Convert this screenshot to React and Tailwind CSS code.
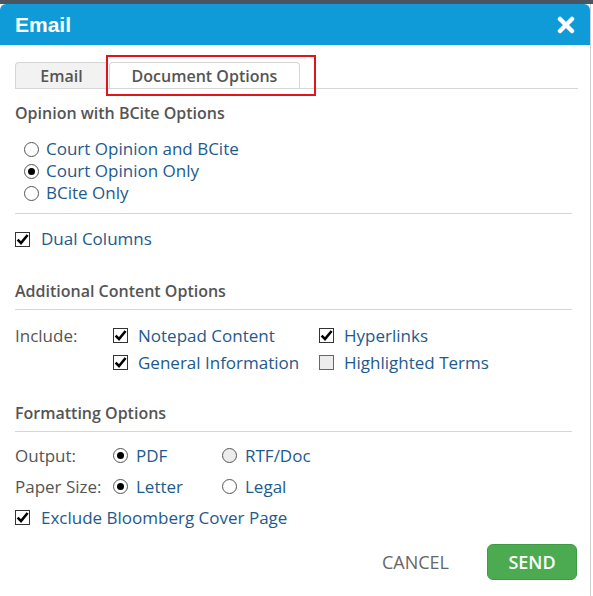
import React from "react";

const BLUE_TEXT = "text-[#1d5a8e]";

function Radio({ checked, dim }) {
  return (
    <span
      className={`inline-flex h-[15px] w-[15px] shrink-0 items-center justify-center rounded-full border border-[#555] ${
        dim ? "bg-[#ececec]" : "bg-white"
      }`}
    >
      {checked && <span className="h-[7px] w-[7px] rounded-full bg-black" />}
    </span>
  );
}

function Check({ checked }) {
  return (
    <span
      className={`inline-flex h-[15px] w-[15px] shrink-0 items-center justify-center border border-[#333] ${
        checked ? "bg-white" : "bg-[#ececec] border-[#666]"
      }`}
    >
      {checked && (
        <svg width="13" height="13" viewBox="0 0 13 13">
          <path d="M1.6 6.6 L5 10 L11.6 2" fill="none" stroke="#000" strokeWidth="2.6" />
        </svg>
      )}
    </span>
  );
}

function SectionTitle({ children }) {
  return (
    <div className="text-[16px] font-semibold leading-[20px] text-[#555]">{children}</div>
  );
}

export default function App() {
  return (
    <div className="relative h-[596px] w-[593px] overflow-hidden bg-white font-['Open_Sans',sans-serif]">
      {/* page behind the dialog */}
      <div className="h-[4px] bg-[#4b5560]" />

      <div className="h-[592px] w-[591px] border-r border-[#cfcfcf]">
        {/* ── Header ── */}
        <div className="flex h-[41px] items-center justify-between rounded-t-[6px] bg-[#0f9bd7] pl-[15px] pr-[15px]">
          <span className="font-['Liberation_Sans',sans-serif] text-[21px] font-bold text-white">Email</span>
          <svg width="18" height="18" viewBox="0 0 18 18">
            <path d="M3 3 L15 15 M15 3 L3 15" stroke="#fff" strokeWidth="4.5" strokeLinecap="round" />
          </svg>
        </div>

        <div className="px-[15px]">
          {/* ── Tabs ── */}
          <div className="mt-[17px] flex h-[27px] w-[563px] items-end border-b border-[#d6d6d6]">
            <div className="flex h-[26px] w-[93px] items-center justify-center rounded-t-[4px] border border-b-0 border-[#d6d6d6] bg-[#f2f2f2] text-[16px] font-semibold text-[#555]">
              Email
            </div>
            <div className="ml-[1px] flex h-[26px] w-[191px] items-center justify-center rounded-t-[4px] border border-b-0 border-[#d6d6d6] bg-white text-[16px] font-semibold text-[#555]">
              Document Options
            </div>
          </div>

          {/* ── Opinion with BCite Options ── */}
          <div className="mt-[14px]">
            <SectionTitle>Opinion with BCite Options</SectionTitle>
          </div>
          <div className={`mt-[15px] flex flex-col pl-[9px] text-[17px] leading-[22px] ${BLUE_TEXT}`}>
            <label className="flex items-center gap-[7px]">
              <Radio /> Court Opinion and BCite
            </label>
            <label className="flex items-center gap-[7px]">
              <Radio checked /> Court Opinion Only
            </label>
            <label className="flex items-center gap-[7px]">
              <Radio /> BCite Only
            </label>
          </div>
          <div className="mt-[9px] h-px w-[557px] bg-[#d6d6d6]" />
          <label className={`mt-[14px] flex items-center gap-[11px] text-[17px] leading-[22px] ${BLUE_TEXT}`}>
            <Check checked /> Dual Columns
          </label>

          {/* ── Additional Content Options ── */}
          <div className="mt-[31px]">
            <SectionTitle>Additional Content Options</SectionTitle>
          </div>
          <div className="mt-[8px] h-px w-[557px] bg-[#d6d6d6]" />
          <div className="mt-[12px] flex text-[17px] leading-[27px]">
            <div className="w-[98px] text-[#555]">Include:</div>
            <div className={`grid grid-cols-[206px_auto] ${BLUE_TEXT}`}>
              <label className="flex items-center gap-[10px]">
                <Check checked /> Notepad Content
              </label>
              <label className="flex items-center gap-[10px]">
                <Check checked /> Hyperlinks
              </label>
              <label className="flex items-center gap-[10px]">
                <Check checked /> General Information
              </label>
              <label className="flex items-center gap-[10px]">
                <Check /> Highlighted Terms
              </label>
            </div>
          </div>

          {/* ── Formatting Options ── */}
          <div className="mt-[27px]">
            <SectionTitle>Formatting Options</SectionTitle>
          </div>
          <div className="mt-[8px] h-px w-[557px] bg-[#d6d6d6]" />
          <div className="mt-[8px] grid grid-cols-[98px_109px_auto] text-[17px] leading-[31px]">
            <div className="text-[#555]">Output:</div>
            <label className={`flex items-center gap-[8px] ${BLUE_TEXT}`}>
              <Radio checked /> PDF
            </label>
            <label className={`flex items-center gap-[8px] ${BLUE_TEXT}`}>
              <Radio dim /> RTF/Doc
            </label>
            <div className="text-[#555]">Paper Size:</div>
            <label className={`flex items-center gap-[8px] ${BLUE_TEXT}`}>
              <Radio checked /> Letter
            </label>
            <label className={`flex items-center gap-[8px] ${BLUE_TEXT}`}>
              <Radio /> Legal
            </label>
          </div>
          <label className={`flex items-center gap-[11px] text-[17px] leading-[31px] ${BLUE_TEXT}`}>
            <Check checked /> Exclude Bloomberg Cover Page
          </label>

          {/* ── Footer ── */}
          <div className="mt-[11px] flex w-[562px] items-center justify-end gap-[38px]">
            <button className="text-[18px] text-[#666]">CANCEL</button>
            <button className="h-[36px] w-[90px] rounded-[6px] border border-[#3f9a45] bg-[#4caa50] text-[18px] font-semibold text-white">
              SEND
            </button>
          </div>
        </div>
      </div>

      {/* red annotation box */}
      <div className="absolute left-[106px] top-[55px] h-[41px] w-[210px] border-2 border-[#e0141a]" />
    </div>
  );
}
